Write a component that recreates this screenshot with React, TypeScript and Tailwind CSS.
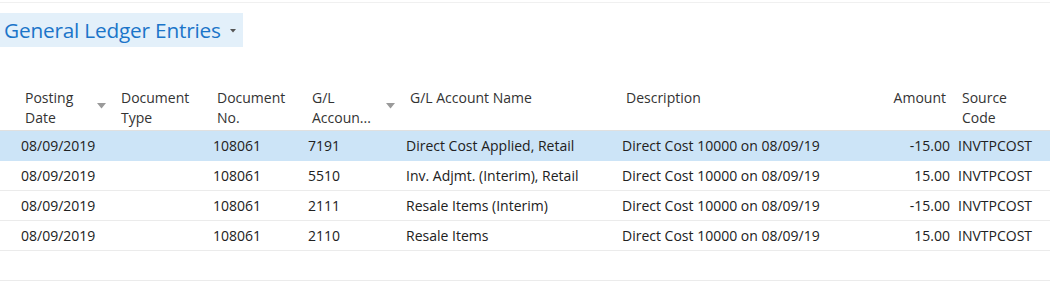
import React from "react"

type Col = {
  key: string
  label: string[]
  w: string
  right?: boolean
  sort?: boolean
}

const cols: Col[] = [
  { key: "date", label: ["Posting", "Date"], w: "w-[96px]", sort: true },
  { key: "type", label: ["Document", "Type"], w: "w-[96px]" },
  { key: "no", label: ["Document", "No."], w: "w-[95px]" },
  { key: "acc", label: ["G/L", "Accoun..."], w: "w-[98px]", sort: true },
  { key: "name", label: ["G/L Account Name"], w: "w-[216px]" },
  { key: "desc", label: ["Description"], w: "w-[232px]" },
  { key: "amount", label: ["Amount"], w: "w-[104px]", right: true },
  { key: "source", label: ["Source", "Code"], w: "w-[92px]" },
]

const rows = [
  { date: "08/09/2019", type: "", no: "108061", acc: "7191", name: "Direct Cost Applied, Retail", desc: "Direct Cost 10000 on 08/09/19", amount: "-15.00", source: "INVTPCOST" },
  { date: "08/09/2019", type: "", no: "108061", acc: "5510", name: "Inv. Adjmt. (Interim), Retail", desc: "Direct Cost 10000 on 08/09/19", amount: "15.00", source: "INVTPCOST" },
  { date: "08/09/2019", type: "", no: "108061", acc: "2111", name: "Resale Items (Interim)", desc: "Direct Cost 10000 on 08/09/19", amount: "-15.00", source: "INVTPCOST" },
  { date: "08/09/2019", type: "", no: "108061", acc: "2110", name: "Resale Items", desc: "Direct Cost 10000 on 08/09/19", amount: "15.00", source: "INVTPCOST" },
]

function SortArrow() {
  return (
    <svg width="9" height="6" viewBox="0 0 9 6" className="absolute right-[7px] top-[15px]">
      <path d="M0 0 L9 0 L4.5 5.5 Z" fill="#9a9a9a" />
    </svg>
  )
}

export default function App() {
  return (
    <div className="w-[1050px] h-[301px] bg-white overflow-hidden text-[#212121] font-['Open_Sans',sans-serif]">
      <div className="h-[3px] border-b border-[#f0f0f0]" />

      <div className="mt-[10px] flex">
        <div className="h-[34px] w-[243px] bg-[#e3f0fa] flex items-center pl-[4px] pr-[7px]">
          <span className="text-[20.8px] text-[#1b75c9] leading-none tracking-[-0.2px]">General Ledger Entries</span>
          <svg width="6" height="4" viewBox="0 0 6 4" className="ml-auto mt-[1px]">
            <path d="M0 0 L6 0 L3 3.5 Z" fill="#555" />
          </svg>
        </div>
      </div>

      <div className="mt-[41px] w-[1050px]">
        <div className="flex pl-[17px] border-b border-[#e0e0e0] pb-[2px]">
          {cols.map(c => (
            <div
              key={c.key}
              className={`${c.w} relative text-[14px] leading-[20px] text-[#333] ${c.right ? "text-right pr-[8px]" : "pl-[8px]"}`}
            >
              {c.label.map((l, i) => (
                <div key={i}>{l}</div>
              ))}
              {c.sort && <SortArrow />}
            </div>
          ))}
        </div>

        {rows.map((r, i) => (
          <div
            key={i}
            className={`flex pl-[17px] h-[30px] items-center border-b text-[14px] ${i === 0 ? "bg-[#cce4f7] border-[#cce4f7]" : "border-[#ebebeb]"}`}
          >
            {cols.map(c => (
              <div
                key={c.key}
                className={`${c.w} whitespace-nowrap ${c.right ? "text-right pr-[4px]" : "pl-[4px]"}`}
              >
                {r[c.key as keyof typeof r]}
              </div>
            ))}
          </div>
        ))}
        <div className="h-[30px] border-b border-[#ebebeb]" />
      </div>
    </div>
  )
}
